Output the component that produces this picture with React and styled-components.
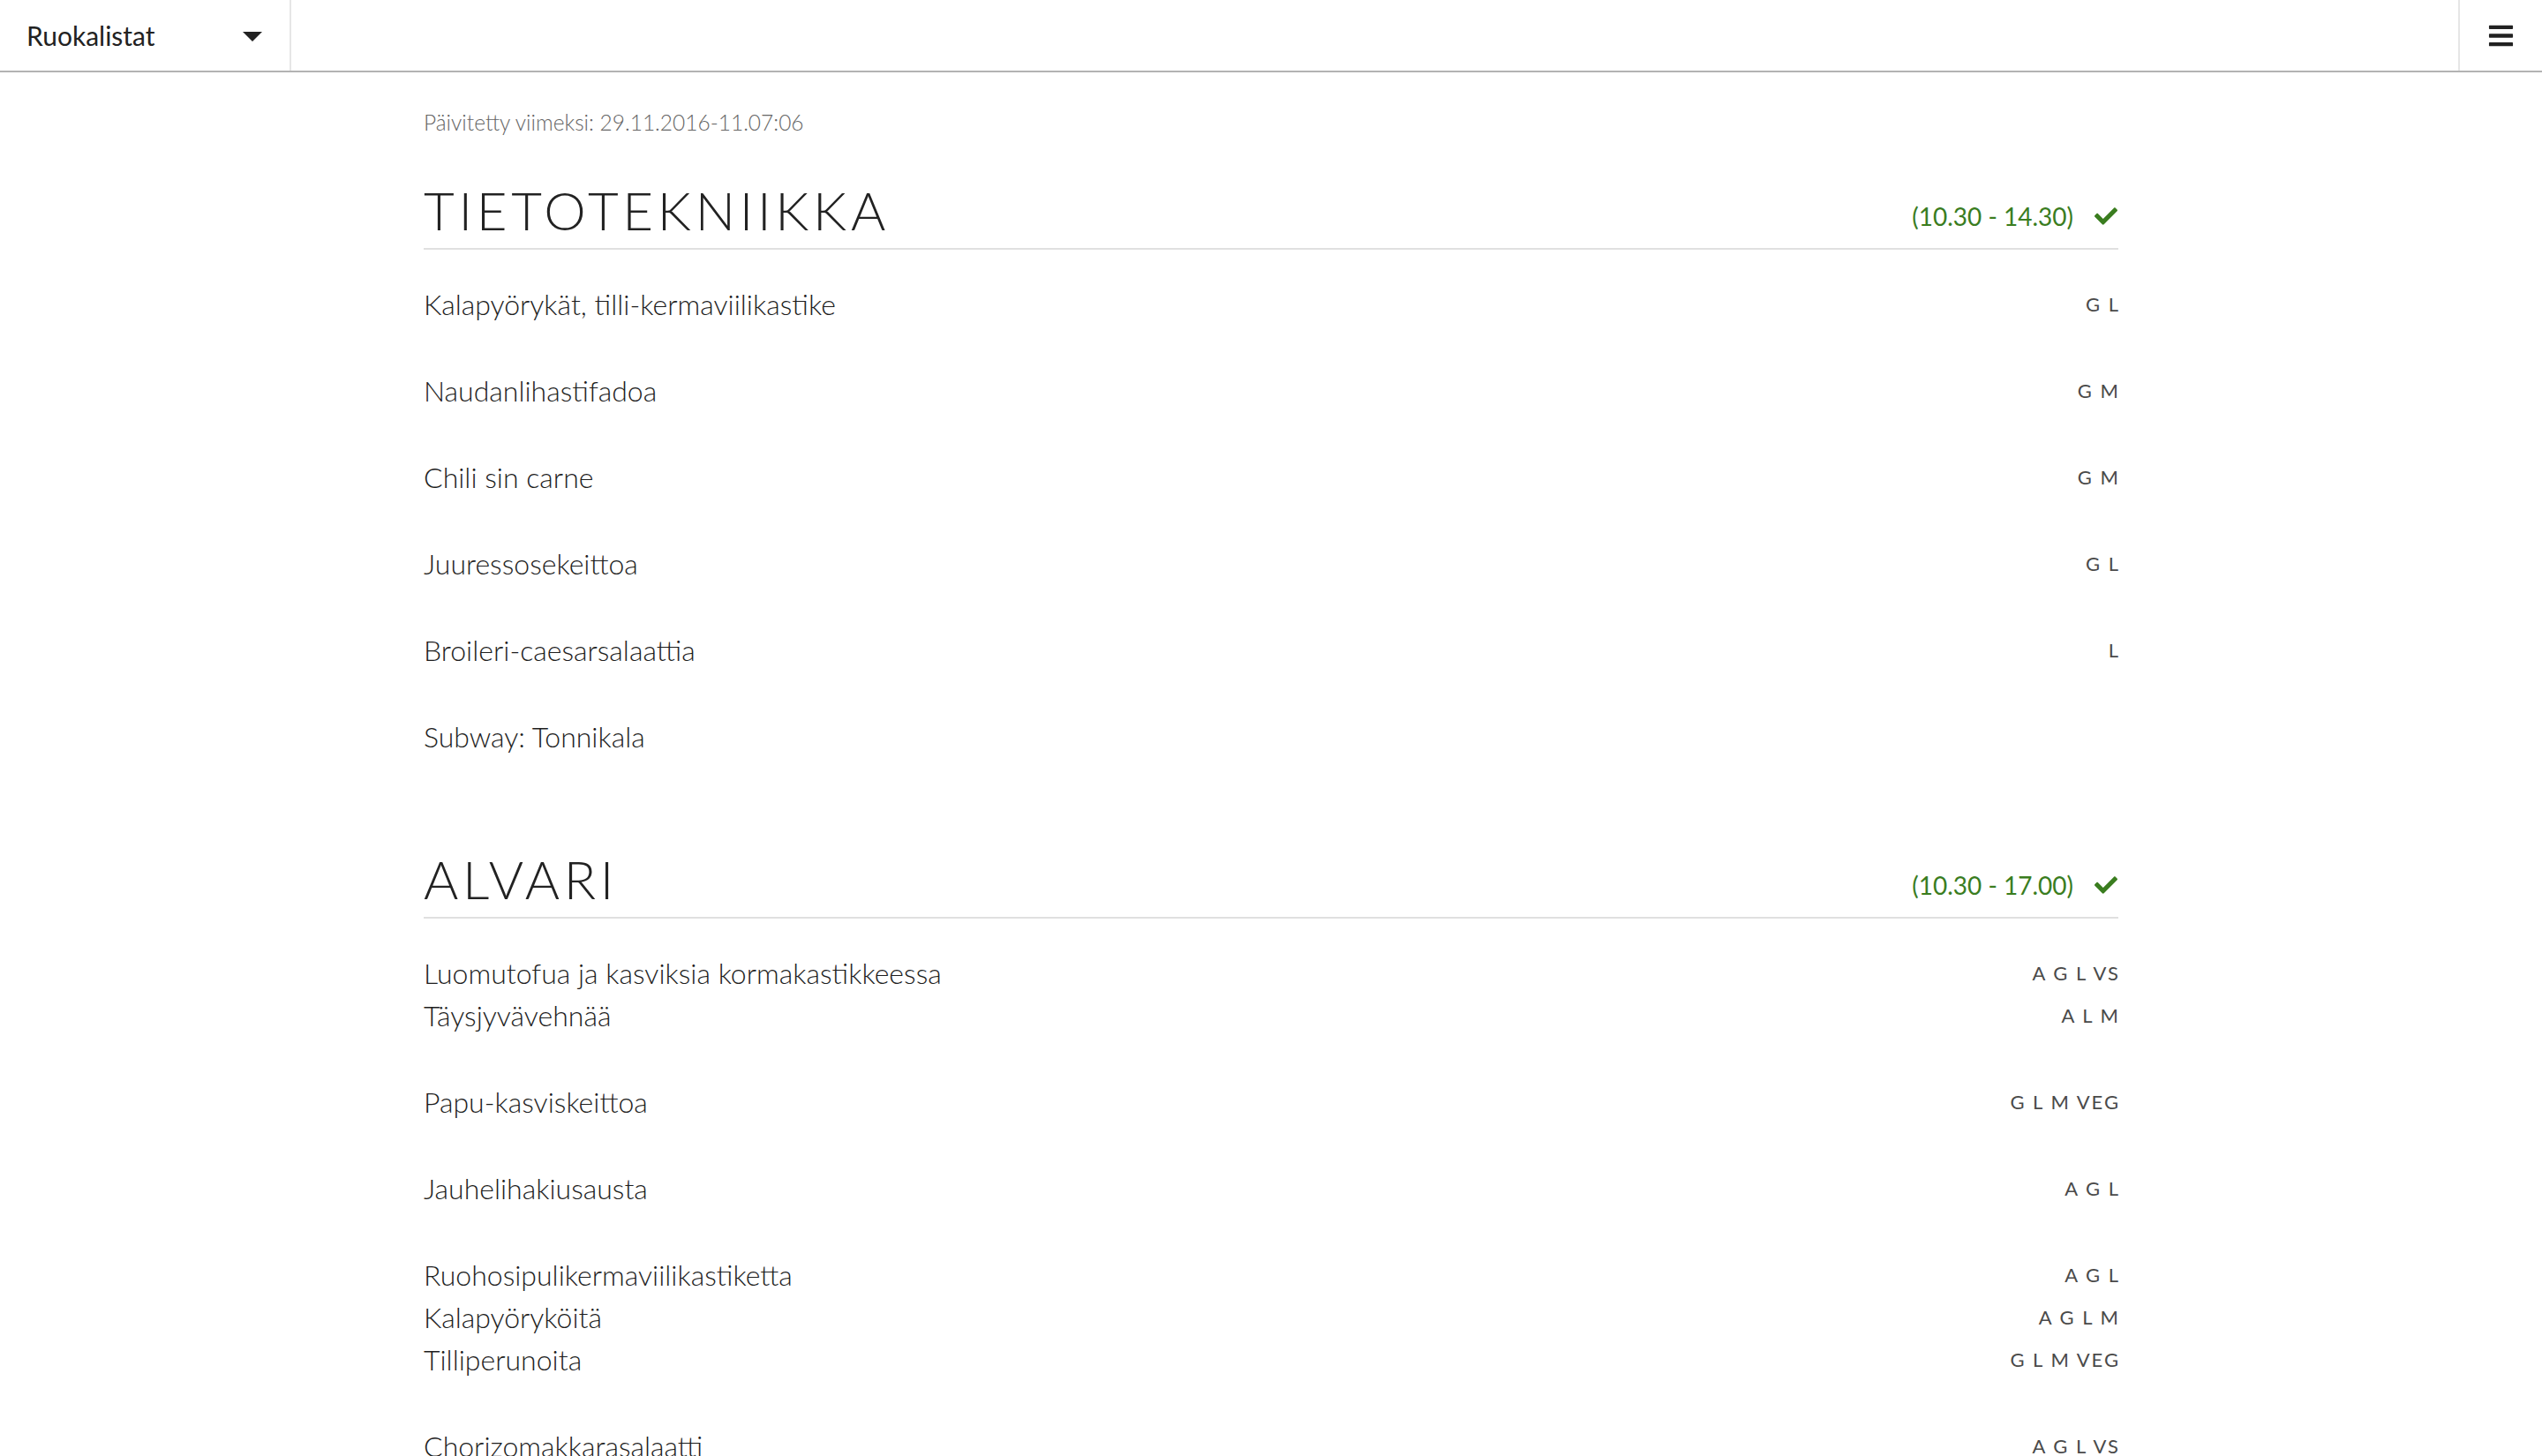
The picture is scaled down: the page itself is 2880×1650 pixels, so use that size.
import React from 'react';
import styled, { createGlobalStyle } from 'styled-components';
import { FaCheck, FaBars } from 'react-icons/fa';

const GlobalStyle = createGlobalStyle`
  body {
    margin: 0;
    background: #fff;
    font-family: Lato, "Open Sans", sans-serif;
    color: #222;
  }
`

const Header = styled.header`
  display: flex;
  height: 80px;
  border-bottom: 2px solid #b3b3b3;
`

const Dropdown = styled.div`
  display: flex;
  align-items: center;
  justify-content: space-between;
  box-sizing: border-box;
  width: 330px;
  padding: 0 31px 0 30px;
  border-right: 2px solid #e6e6e6;
  font-size: 30px;
  font-weight: 400;
  color: #222;
`

const Caret = styled.span`
  width: 0;
  height: 0;
  border-left: 11px solid transparent;
  border-right: 11px solid transparent;
  border-top: 11px solid #222;
  margin-top: 2px;
`

const Spacer = styled.div`
  flex: 1;
`

const MenuButton = styled.div`
  display: flex;
  align-items: center;
  justify-content: center;
  width: 93px;
  border-left: 2px solid #e6e6e6;
  color: #222;
`

const Main = styled.main`
  width: 1920px;
  margin: 0 auto;
  padding-top: 42px;
`

const Updated = styled.div`
  font-size: 24.5px;
  line-height: 30px;
  font-weight: 300;
  color: #666;
  margin-bottom: 48px;
`

const Section = styled.section`
  & + & {
    margin-top: 101px;
  }
`

const TitleRow = styled.div`
  display: flex;
  align-items: center;
  justify-content: space-between;
  padding-bottom: 7px;
  border-bottom: 2px solid #e0e0e0;
`

const Title = styled.h2`
  margin: 0;
  font-size: 60px;
  line-height: 72px;
  font-weight: 300;
  letter-spacing: 4.7px;
  color: #222;
`

const Hours = styled.div`
  display: flex;
  align-items: center;
  gap: 24px;
  padding-top: 14px;
  font-size: 28px;
  font-weight: 400;
  color: #3a7d1f;
  margin-right: 1px;
`

const List = styled.div`
  display: flex;
  flex-direction: column;
  gap: 50px;
  padding-top: 38px;
`

const Group = styled.div`
  display: flex;
  flex-direction: column;
`

const Line = styled.div`
  display: flex;
  justify-content: space-between;
  align-items: center;
  height: 48px;
`

const Dish = styled.span`
  font-size: 32px;
  line-height: 48px;
  font-weight: 300;
  color: #1e1e1e;
`

const Diets = styled.span`
  font-size: 22px;
  line-height: 1;
  font-weight: 400;
  letter-spacing: 2px;
  color: #4a4a4a;
  margin-right: -2px;
`

const menus = [
  {
    name: "TIETOTEKNIIKKA",
    hours: "(10.30 - 14.30)",
    groups: [
      [["Kalapyörykät, tilli-kermaviilikastike", "G L"]],
      [["Naudanlihastifadoa", "G M"]],
      [["Chili sin carne", "G M"]],
      [["Juuressosekeittoa", "G L"]],
      [["Broileri-caesarsalaattia", "L"]],
      [["Subway: Tonnikala", ""]],
    ]
  },
  {
    name: "ALVARI",
    hours: "(10.30 - 17.00)",
    groups: [
      [
        ["Luomutofua ja kasviksia kormakastikkeessa", "A G L VS"],
        ["Täysjyvävehnää", "A L M"],
      ],
      [["Papu-kasviskeittoa", "G L M VEG"]],
      [["Jauhelihakiusausta", "A G L"]],
      [
        ["Ruohosipulikermaviilikastiketta", "A G L"],
        ["Kalapyöryköitä", "A G L M"],
        ["Tilliperunoita", "G L M VEG"],
      ],
      [["Chorizomakkarasalaatti", "A G L VS"]],
    ]
  }
]

function App() {
  return (
    <>
      <GlobalStyle />
      <Header>
        <Dropdown>
          <span>Ruokalistat</span>
          <Caret />
        </Dropdown>
        <Spacer />
        <MenuButton>
          <FaBars size={31} />
        </MenuButton>
      </Header>
      <Main>
        <Updated>Päivitetty viimeksi: 29.11.2016-11.07:06</Updated>
        {menus.map(menu => (
          <Section key={menu.name}>
            <TitleRow>
              <Title>{menu.name}</Title>
              <Hours>
                <span>{menu.hours}</span>
                <FaCheck size={26} />
              </Hours>
            </TitleRow>
            <List>
              {menu.groups.map((group, i) => (
                <Group key={i}>
                  {group.map(([dish, diets]) => (
                    <Line key={dish}>
                      <Dish>{dish}</Dish>
                      <Diets>{diets}</Diets>
                    </Line>
                  ))}
                </Group>
              ))}
            </List>
          </Section>
        ))}
      </Main>
    </>
  );
}
export default App;
